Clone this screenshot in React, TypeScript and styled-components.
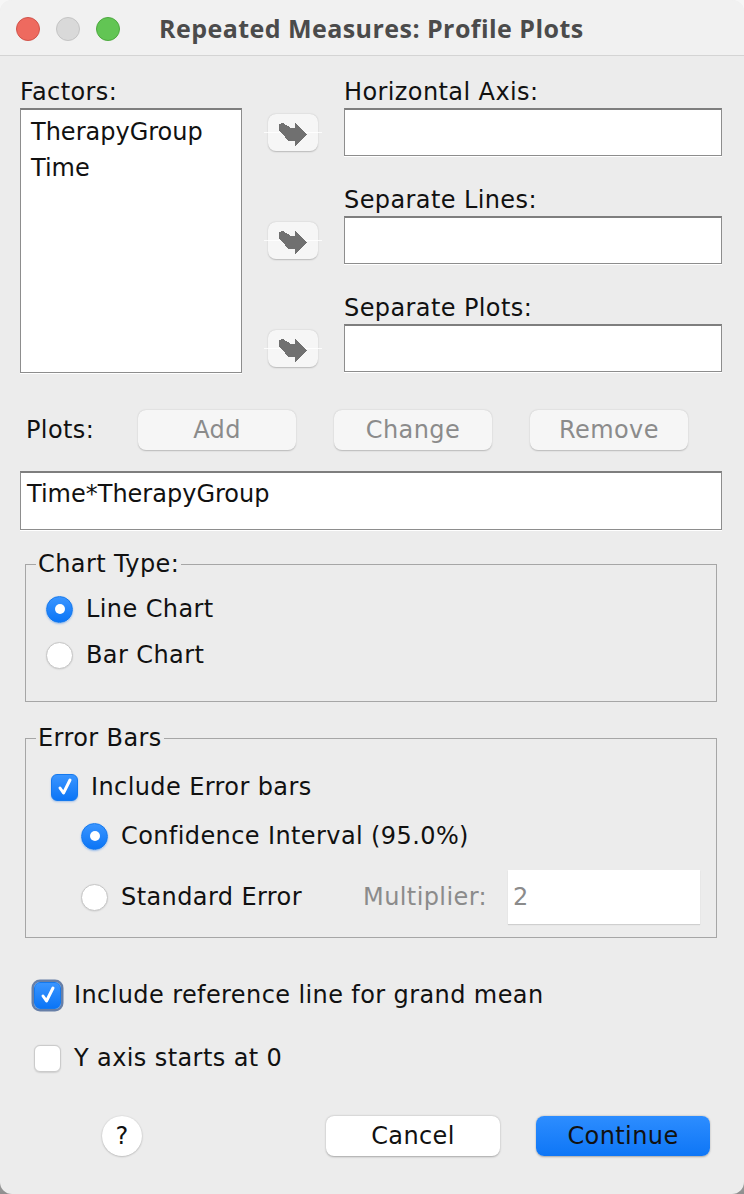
import React from "react";
import styled, { createGlobalStyle } from "styled-components";

const Global = createGlobalStyle`
  html, body { margin: 0; padding: 0; }
  body {
    background: linear-gradient(#f6f6f6 0%, #f6f6f6 92%, #8f8f8f 100%);
    font-family: "DejaVu Sans", "Noto Sans", sans-serif;
    -webkit-font-smoothing: antialiased;
  }
`;

const Window = styled.div`
  width: 744px;
  height: 1194px;
  box-sizing: border-box;
  background: #ececec;
  border-radius: 12px;
  overflow: hidden;
  display: flex;
  flex-direction: column;
  color: #111;
  font-size: 24px;
  letter-spacing: 0.4px;
`;

const TitleBar = styled.div`
  height: 55px;
  flex: none;
  background: #f1f1f1;
  border-bottom: 1px solid #d4d4d4;
  display: flex;
  align-items: center;
  padding-left: 16px;
  gap: 16px;
`;

const Light = styled.span<{ $c: string; $b: string }>`
  width: 24px;
  height: 24px;
  border-radius: 50%;
  box-sizing: border-box;
  background: ${(p) => p.$c};
  border: 1px solid ${(p) => p.$b};
  margin-top: 2px;
`;

const Title = styled.div`
  margin-left: 23px;
  font-family: "Open Sans", Roboto, "Liberation Sans", sans-serif;
  font-weight: 700;
  font-size: 25px;
  letter-spacing: 0.45px;
  color: #4b4b4b;
`;

const Content = styled.div`
  padding: 0 22px 0 20px;
  display: flex;
  flex-direction: column;
`;

const Label = styled.div`
  line-height: 26px;
  height: 26px;
  white-space: nowrap;
`;

const TopSection = styled.div`
  margin-top: 23px;
  display: flex;
`;

const LeftCol = styled.div`
  width: 222px;
  display: flex;
  flex-direction: column;
  gap: 3px;
`;

const ListBox = styled.div`
  height: 265px;
  box-sizing: border-box;
  background: #fff;
  border: 1px solid #8d8d8d;
  border-top: 2px solid #7e7e7e;
  box-shadow: 0 1px 0 #fff;
  padding: 4px 0 0 10px;
`;

const ListItem = styled.div`
  line-height: 36px;
  height: 36px;
  letter-spacing: 0;
`;

const TargetsCol = styled.div`
  flex: 1;
  margin-left: 26px;
  display: flex;
  flex-direction: column;
  gap: 31px;
`;

const TargetRow = styled.div`
  display: flex;
  align-items: flex-end;
  gap: 26px;
`;

const ArrowButton = styled.div`
  position: relative;
  width: 50px;
  height: 37px;
  margin-bottom: 5px;
  border-radius: 8px;
  background: #f6f6f6;
  box-shadow: 0 0.5px 1.5px rgba(0, 0, 0, 0.22);
  display: flex;
  align-items: center;
  justify-content: center;
  padding-top: 4px;
  box-sizing: border-box;
  &::before {
    content: "";
    position: absolute;
    left: -4px;
    right: -4px;
    top: 18px;
    height: 1px;
    background: rgba(255, 255, 255, 0.85);
  }
  svg { position: relative; }
`;

const FieldCol = styled.div`
  flex: 1;
  display: flex;
  flex-direction: column;
  gap: 3px;
`;

const FieldBox = styled.div`
  height: 48px;
  box-sizing: border-box;
  background: #fff;
  border: 1px solid #8d8d8d;
  border-top: 2px solid #7e7e7e;
  box-shadow: 0 1px 0 #fff;
`;

const PlotsRow = styled.div`
  margin-top: 37px;
  height: 40px;
  display: flex;
  align-items: center;
`;

const PlotsLabel = styled(Label)`
  width: 118px;
  box-sizing: border-box;
  padding-left: 6px;
`;

const Buttons = styled.div`
  display: flex;
  gap: 38px;
`;

const DisabledButton = styled.div`
  width: 158px;
  height: 40px;
  border-radius: 8px;
  background: #f6f6f6;
  box-shadow: 0 0.5px 1.5px rgba(0, 0, 0, 0.22);
  color: #8b8b8b;
  display: flex;
  align-items: center;
  justify-content: center;
  line-height: 26px;
`;

const PlotsBox = styled.div`
  margin-top: 21px;
  height: 59px;
  box-sizing: border-box;
  background: #fff;
  border: 1px solid #8d8d8d;
  border-top: 2px solid #7e7e7e;
  box-shadow: 0 1px 0 #fff;
  padding: 8px 6px 0;
  line-height: 26px;
  letter-spacing: 0;
`;

const Group = styled.fieldset<{ $mt: number; $pt: number; $pb: number }>`
  margin: ${(p) => p.$mt}px 5px 0;
  padding: ${(p) => p.$pt}px 16px ${(p) => p.$pb}px 0;
  border: 1px solid #a6a6a6;
  min-width: 0;
`;

const Legend = styled.legend`
  margin-left: 10px;
  padding: 0 2px;
  line-height: 26px;
  height: 26px;
`;

const GroupBody = styled.div<{ $left: number }>`
  padding-left: ${(p) => p.$left}px;
  display: flex;
  flex-direction: column;
`;

const OptionRow = styled.div<{ $h?: number; $indent?: number; $mt?: number }>`
  height: ${(p) => p.$h ?? 46}px;
  margin-top: ${(p) => p.$mt ?? 0}px;
  padding-left: ${(p) => p.$indent ?? 0}px;
  display: flex;
  align-items: center;
  gap: 13px;
  line-height: 26px;
  white-space: nowrap;
`;

const Radio = styled.span<{ $on?: boolean }>`
  width: 27px;
  height: 27px;
  flex: none;
  box-sizing: border-box;
  border-radius: 50%;
  display: flex;
  align-items: center;
  justify-content: center;
  background: ${(p) => (p.$on ? "linear-gradient(#3a95ff, #0b75f6)" : "#fff")};
  border: 1px solid ${(p) => (p.$on ? "#1479ee" : "#c6c6c6")};
  box-shadow: ${(p) =>
    p.$on ? "0 1px 2px rgba(0, 100, 230, 0.35)" : "0 0.5px 1.5px rgba(0,0,0,0.12)"};
  &::after {
    content: "";
    display: ${(p) => (p.$on ? "block" : "none")};
    width: 10px;
    height: 10px;
    border-radius: 50%;
    background: #fff;
  }
`;

const Check = styled.span<{ $on?: boolean; $focus?: boolean }>`
  width: 27px;
  height: 27px;
  flex: none;
  box-sizing: border-box;
  border-radius: 6px;
  display: flex;
  align-items: center;
  justify-content: center;
  background: ${(p) => (p.$on ? "linear-gradient(#3a95ff, #0b75f6)" : "#fff")};
  border: 1px solid ${(p) => (p.$on ? "#1479ee" : "#cbcbcb")};
  box-shadow: ${(p) =>
    p.$focus
      ? "0 0 0 2.5px rgba(70, 100, 150, 0.8)"
      : p.$on
      ? "0 1px 2px rgba(0, 100, 230, 0.3)"
      : "0 0.5px 1.5px rgba(0,0,0,0.12)"};
`;

const Spacer = styled.div`
  flex: 1;
`;

const MultLabel = styled.span`
  color: #8b8b8b;
  margin-right: 8px;
`;

const MultInput = styled.div`
  width: 192px;
  height: 54px;
  box-sizing: border-box;
  background: #fff;
  box-shadow: 0 1px 1px rgba(0, 0, 0, 0.12);
  color: #8b8b8b;
  padding-left: 5px;
  display: flex;
  align-items: center;
`;

const BottomChecks = styled.div`
  margin-top: 34px;
  padding-left: 14px;
  display: flex;
  flex-direction: column;
  gap: 17px;
`;

const ActionRow = styled.div`
  margin-top: 35px;
  height: 40px;
  display: flex;
  align-items: center;
  padding: 0 12px 0 82px;
`;

const HelpButton = styled.div`
  width: 40px;
  height: 40px;
  border-radius: 50%;
  background: #fff;
  box-shadow: 0 0.5px 2px rgba(0, 0, 0, 0.3);
  display: flex;
  align-items: center;
  justify-content: center;
  line-height: 26px;
`;

const PushButton = styled.div<{ $primary?: boolean }>`
  width: 174px;
  height: 40px;
  border-radius: 8px;
  background: ${(p) => (p.$primary ? "linear-gradient(#2d8dff, #0e76f6)" : "#fff")};
  box-shadow: 0 0.5px 2px rgba(0, 0, 0, 0.3);
  color: #111;
  display: flex;
  align-items: center;
  justify-content: center;
  line-height: 26px;
  & + & {
    margin-left: 36px;
  }
`;

const Arrow = () => (
  <svg width="29" height="24" viewBox="0 0 29 24" shapeRendering="crispEdges">
    <polygon
      points="0,1 4,0 12,5 16,5 16,0 28.5,11.5 16,23.5 16,17.5 9,17.5 0,7"
      fill="#707070"
    />
  </svg>
);

const Tick = () => (
  <svg width="18" height="20" viewBox="0 0 18 20">
    <path
      d="M4 11 L7.5 16 L14 3"
      fill="none"
      stroke="#fff"
      strokeWidth="3"
      strokeLinecap="round"
      strokeLinejoin="round"
    />
  </svg>
);

const targets = ["Horizontal Axis:", "Separate Lines:", "Separate Plots:"];

export default function App() {
  return (
    <>
      <Global />
      <Window>
        <TitleBar>
          <Light $c="#ee6a5f" $b="#d1534a" />
          <Light $c="#d9d9d9" $b="#c4c4c4" />
          <Light $c="#62c554" $b="#4da93f" />
          <Title>Repeated Measures: Profile Plots</Title>
        </TitleBar>
        <Content>
          <TopSection>
            <LeftCol>
              <Label>Factors:</Label>
              <ListBox>
                <ListItem>TherapyGroup</ListItem>
                <ListItem>Time</ListItem>
              </ListBox>
            </LeftCol>
            <TargetsCol>
              {targets.map((t) => (
                <TargetRow key={t}>
                  <ArrowButton>
                    <Arrow />
                  </ArrowButton>
                  <FieldCol>
                    <Label>{t}</Label>
                    <FieldBox />
                  </FieldCol>
                </TargetRow>
              ))}
            </TargetsCol>
          </TopSection>

          <PlotsRow>
            <PlotsLabel>Plots:</PlotsLabel>
            <Buttons>
              <DisabledButton>Add</DisabledButton>
              <DisabledButton>Change</DisabledButton>
              <DisabledButton>Remove</DisabledButton>
            </Buttons>
          </PlotsRow>

          <PlotsBox>Time*TherapyGroup</PlotsBox>

          <Group $mt={21} $pt={9} $pb={23}>
            <Legend>Chart Type:</Legend>
            <GroupBody $left={20}>
              <OptionRow>
                <Radio $on />
                Line Chart
              </OptionRow>
              <OptionRow>
                <Radio />
                Bar Chart
              </OptionRow>
            </GroupBody>
          </Group>

          <Group $mt={23} $pt={13} $pb={13}>
            <Legend>Error Bars</Legend>
            <GroupBody $left={25}>
              <OptionRow>
                <Check $on>
                  <Tick />
                </Check>
                Include Error bars
              </OptionRow>
              <OptionRow $indent={30} $mt={3}>
                <Radio $on />
                Confidence Interval (95.0%)
              </OptionRow>
              <OptionRow $indent={30} $mt={11} $h={54}>
                <Radio />
                Standard Error
                <Spacer />
                <MultLabel>Multiplier:</MultLabel>
                <MultInput>2</MultInput>
              </OptionRow>
            </GroupBody>
          </Group>

          <BottomChecks>
            <OptionRow>
              <Check $on $focus>
                <Tick />
              </Check>
              Include reference line for grand mean
            </OptionRow>
            <OptionRow>
              <Check />
              Y axis starts at 0
            </OptionRow>
          </BottomChecks>

          <ActionRow>
            <HelpButton>?</HelpButton>
            <Spacer />
            <PushButton>Cancel</PushButton>
            <PushButton $primary>Continue</PushButton>
          </ActionRow>
        </Content>
      </Window>
    </>
  );
}
